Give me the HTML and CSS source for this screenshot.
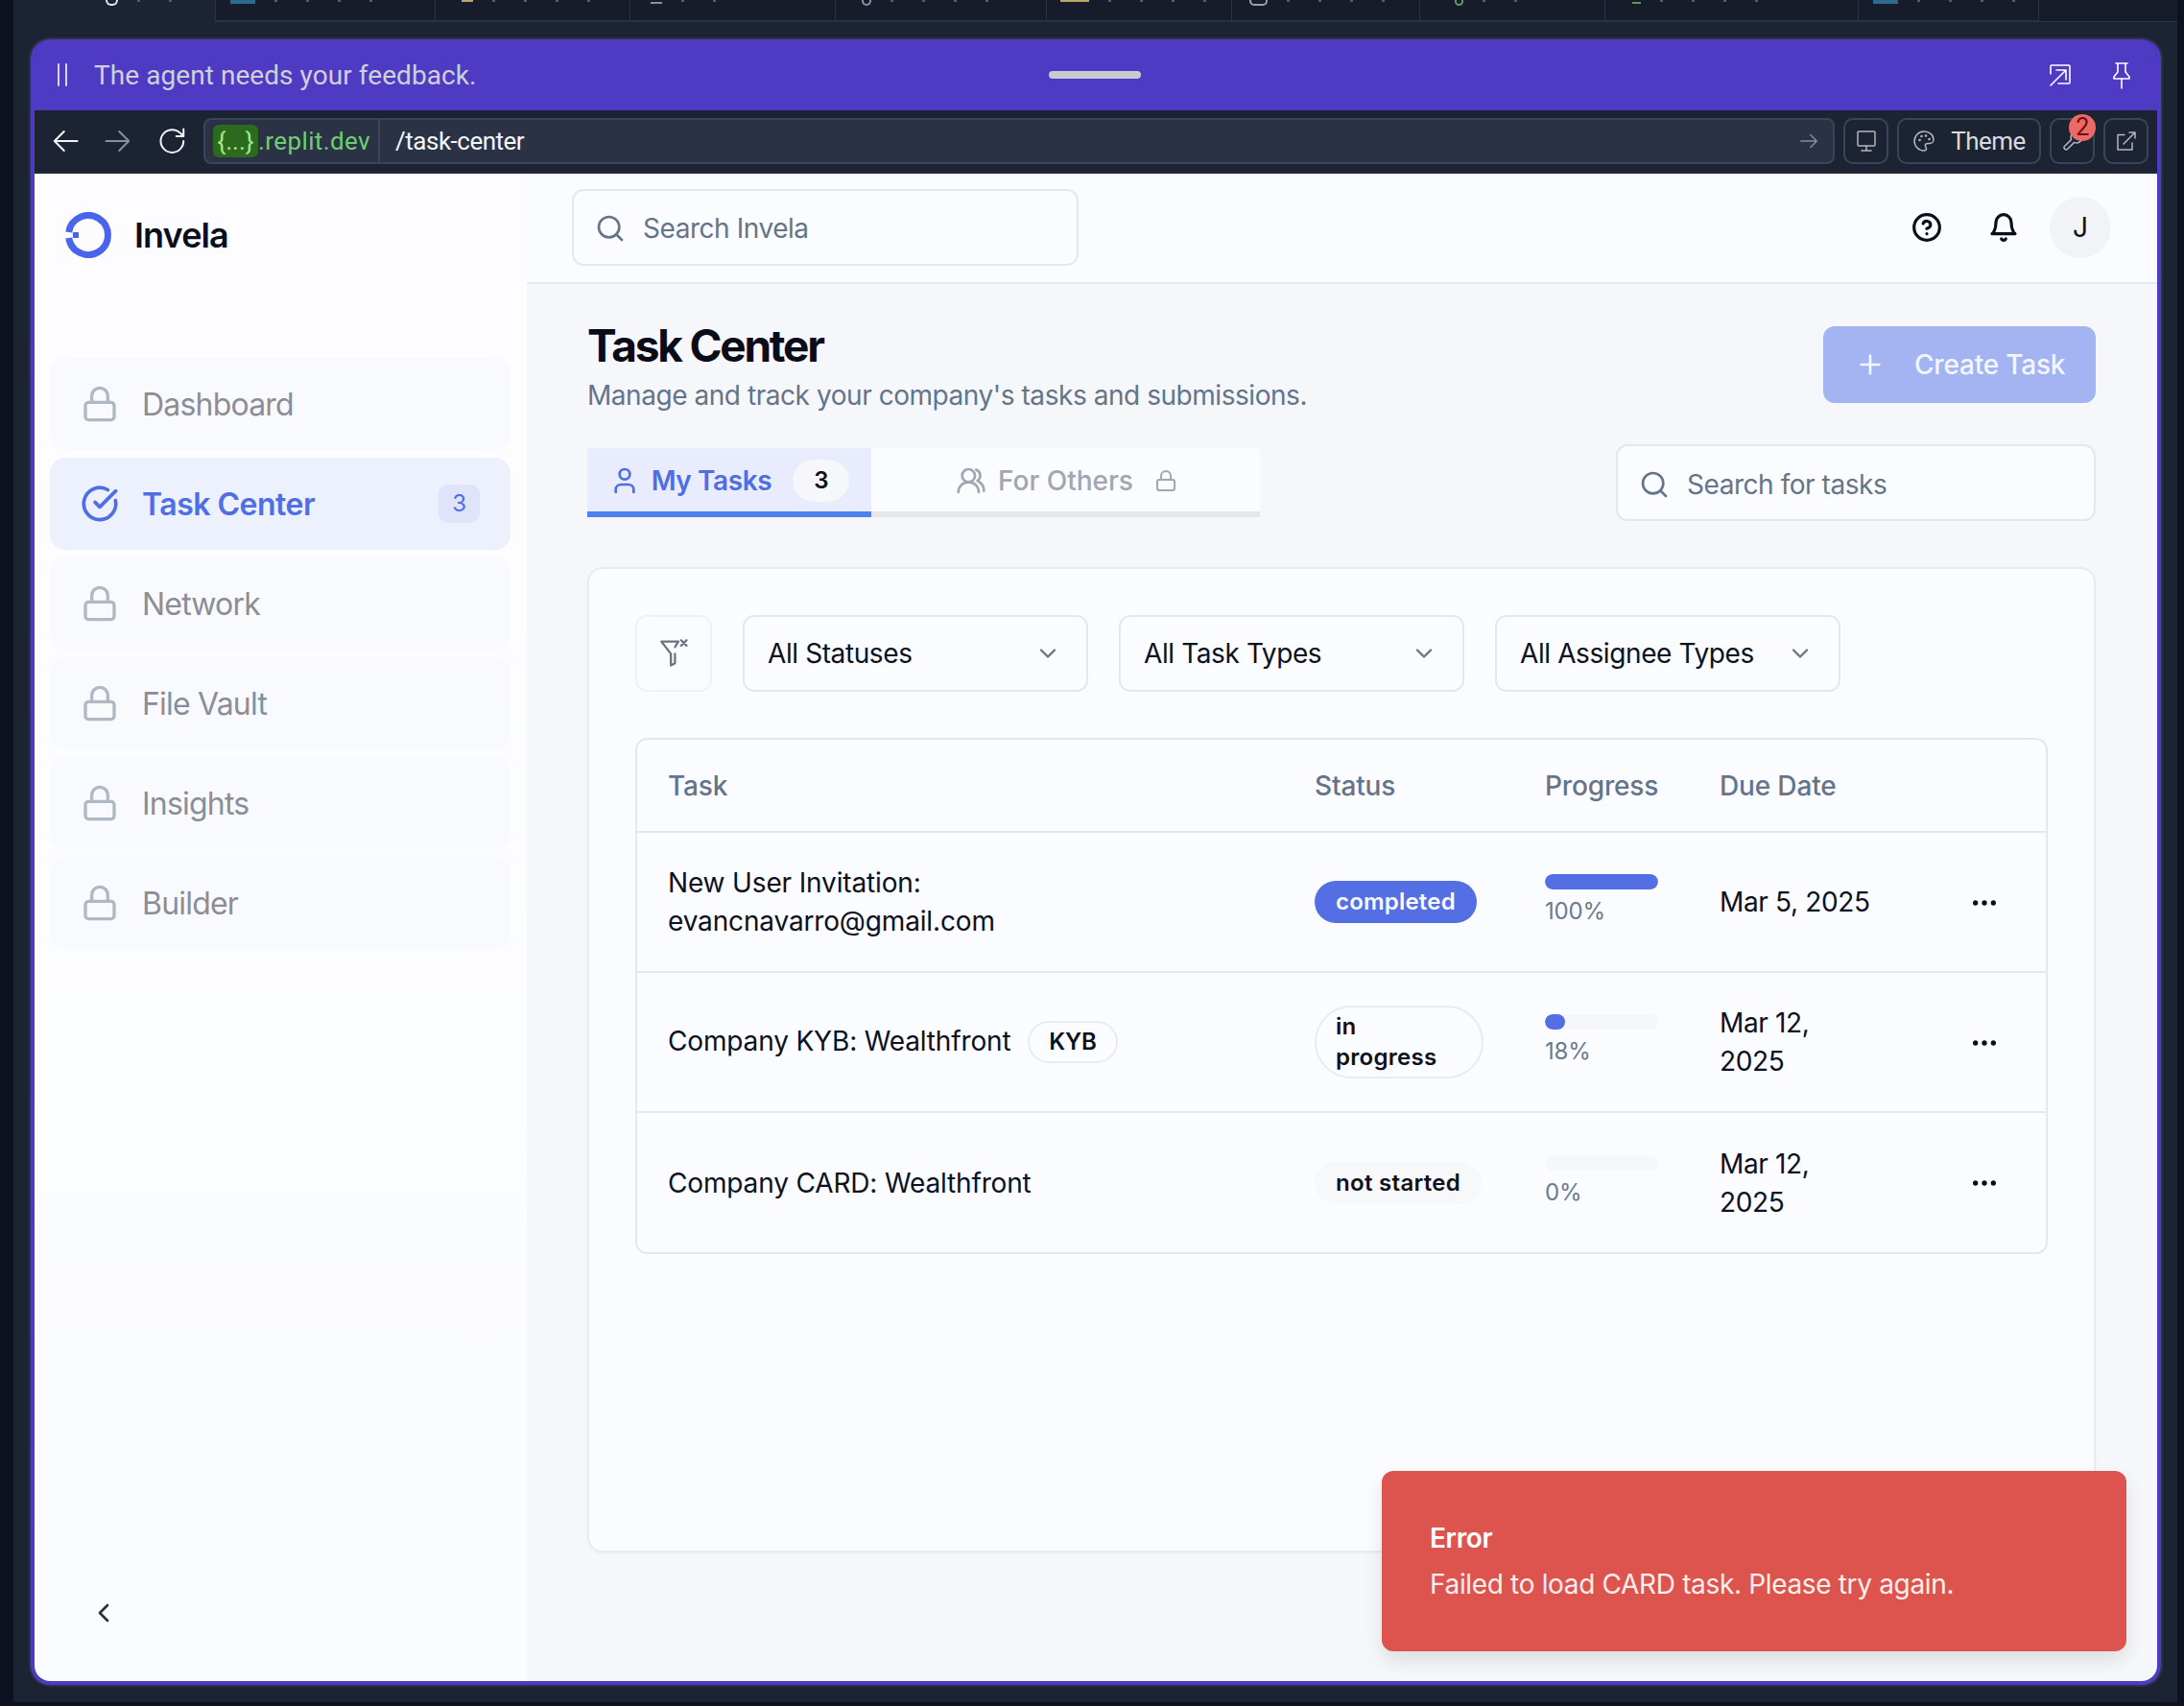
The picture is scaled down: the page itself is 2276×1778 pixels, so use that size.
FILE: index.html
```html
<!DOCTYPE html>
<html lang="en">
<head>
    <meta charset="UTF-8">
    <meta name="viewport" content="width=device-width, initial-scale=1.0">
    <title>Invela - Task Center</title>
    <link rel="stylesheet" href="styles.css">
</head>
<body>
    <div class="tabstrip">
        <div class="strip-tab strip-tab-active"><i class="mark mark-ring"></i><i class="dots dots-short"></i></div>
        <div class="strip-tab strip-w1"><i class="mark mark-blue"></i><i class="dots"></i></div>
        <div class="strip-tab strip-w2"><i class="mark mark-tan"></i><i class="dots"></i></div>
        <div class="strip-tab strip-w3"><i class="mark mark-stem"></i><i class="dots dots-short"></i></div>
        <div class="strip-tab strip-w4"><i class="mark mark-cup"></i><i class="dots"></i></div>
        <div class="strip-tab strip-w5"><i class="mark mark-tan mark-wide"></i><i class="dots"></i></div>
        <div class="strip-tab strip-w6"><i class="mark mark-cup mark-grey"></i><i class="dots"></i></div>
        <div class="strip-tab strip-w7"><i class="mark mark-cup mark-green"></i><i class="dots dots-short"></i></div>
        <div class="strip-tab strip-w8"><i class="mark mark-stem mark-green"></i><i class="dots"></i></div>
        <div class="strip-tab strip-w9"><i class="mark mark-blue"></i><i class="dots"></i></div>
        <div class="strip-end"></div>
    </div>

    <div class="frame">
        <div class="agentbar">
            <svg class="pause-icon" viewBox="0 0 14 24"><path d="M3 1v22M11 1v22"/></svg>
            <span class="agent-msg">The agent needs your feedback.</span>
            <span class="drag-handle"></span>
            <svg class="agent-icon" viewBox="0 0 24 24"><path d="M2 11V3a1 1 0 0 1 1-1h18a1 1 0 0 1 1 1v17a1 1 0 0 1-1 1H10M2 23 18 7M8 7h10v10"/></svg>
            <svg class="agent-icon icon-pin" viewBox="0 0 18 28"><path d="M3 1h12M5 1v9l-4 5v2h16v-2l-4-5V1M9 17v10"/></svg>
        </div>

        <div class="browserbar">
            <svg class="nav-icon nav-on" viewBox="0 0 24 24"><path d="m11 20-8-8 8-8M3 12h19"/></svg>
            <svg class="nav-icon nav-off" viewBox="0 0 24 24"><path d="M2 12h19M13 4l8 8-8 8"/></svg>
            <svg class="nav-icon nav-on nav-reload" viewBox="0 0 24 24"><path d="M21 12a9.500 9.500 0 1 1-9.500-9.500c2.600 0 5 1 6.800 2.800L21 8M21 2v6h-6"/></svg>
            <div class="urlbox">
                <span class="url-host"><span class="url-tag">{...}</span>.replit.dev</span>
                <span class="url-path">/task-center</span>
                <svg class="url-go" viewBox="0 0 24 24"><path d="M3 12h18M14 5l7 7-7 7"/></svg>
            </div>
            <button class="chrome-btn chrome-square">
                <svg viewBox="0 0 24 24"><rect x="3" y="2" width="18" height="15" rx="1"/><path d="M12 17v5M7 22h10"/></svg>
            </button>
            <button class="chrome-btn chrome-theme">
                <svg viewBox="0 0 24 24"><path d="M12 2a10 10 0 0 0 0 20c1.500 0 2.500-1 2.500-2.300 0-.6-.3-1.100-.6-1.500-.4-.4-.6-.9-.6-1.500 0-1.300 1-2.200 2.300-2.200H18a4 4 0 0 0 4-4C22 5.500 17.500 2 12 2z"/><circle cx="7.500" cy="11" r=".6"/><circle cx="9.500" cy="7" r=".6"/><circle cx="14" cy="6.500" r=".6"/><circle cx="17.500" cy="10" r=".6"/></svg>
                Theme
            </button>
            <button class="chrome-btn chrome-square chrome-tools">
                <svg viewBox="0 0 24 24"><path d="M14.700 6.300a1 1 0 0 0 0 1.400l1.600 1.600a1 1 0 0 0 1.400 0l3.800-3.800a6 6 0 0 1-7.900 7.900l-6.900 6.900a2.100 2.100 0 0 1-3-3l6.900-6.900a6 6 0 0 1 7.900-7.900z"/></svg>
                <span class="tools-badge">2</span>
            </button>
            <button class="chrome-btn chrome-square">
                <svg viewBox="0 0 24 24"><path d="M10 5.500H3V21h15v-7M9 15 21 3M15 3h6v6"/></svg>
            </button>
        </div>

        <div class="app">
            <aside class="sidebar">
                <div class="brand">
                    <svg class="brand-logo" viewBox="0 0 48 48">
                        <path d="M3.700 21A20.500 20.500 0 1 1 3.700 27"/>
                        <rect x="8" y="21" width="6" height="6"/>
                    </svg>
                    <span class="brand-name">Invela</span>
                </div>
                <nav class="nav">
                    <a class="nav-item">
                        <svg class="lock" viewBox="0 0 24 24"><rect x="3" y="11" width="18" height="11" rx="2"/><path d="M7 11V7a5 5 0 0 1 10 0v4"/></svg>
                        Dashboard
                    </a>
                    <a class="nav-item nav-item-active">
                        <svg class="lock" viewBox="0 0 24 24"><path d="M21.800 10A10 10 0 1 1 17 3.300"/><path d="m9 11 3 3L22 4"/></svg>
                        Task Center
                        <span class="nav-badge">3</span>
                    </a>
                    <a class="nav-item">
                        <svg class="lock" viewBox="0 0 24 24"><rect x="3" y="11" width="18" height="11" rx="2"/><path d="M7 11V7a5 5 0 0 1 10 0v4"/></svg>
                        Network
                    </a>
                    <a class="nav-item">
                        <svg class="lock" viewBox="0 0 24 24"><rect x="3" y="11" width="18" height="11" rx="2"/><path d="M7 11V7a5 5 0 0 1 10 0v4"/></svg>
                        File Vault
                    </a>
                    <a class="nav-item">
                        <svg class="lock" viewBox="0 0 24 24"><rect x="3" y="11" width="18" height="11" rx="2"/><path d="M7 11V7a5 5 0 0 1 10 0v4"/></svg>
                        Insights
                    </a>
                    <a class="nav-item">
                        <svg class="lock" viewBox="0 0 24 24"><rect x="3" y="11" width="18" height="11" rx="2"/><path d="M7 11V7a5 5 0 0 1 10 0v4"/></svg>
                        Builder
                    </a>
                </nav>
                <svg class="collapse" viewBox="0 0 24 24"><path d="m15 18-6-6 6-6"/></svg>
            </aside>

            <div class="main">
                <header class="topbar">
                    <div class="search search-top">
                        <svg viewBox="0 0 24 24"><circle cx="11" cy="11" r="8"/><path d="m21 21-4.300-4.300"/></svg>
                        Search Invela
                    </div>
                    <div class="topbar-right">
                        <svg class="top-icon" viewBox="0 0 24 24"><circle cx="12" cy="12" r="10"/><path d="M9.100 9a3 3 0 0 1 5.800 1c0 2-3 3-3 3M12 17h.01"/></svg>
                        <svg class="top-icon" viewBox="0 0 24 24"><path d="M6 8a6 6 0 0 1 12 0c0 7 3 9 3 9H3s3-2 3-9M10.300 21a1.900 1.900 0 0 0 3.400 0"/></svg>
                        <span class="avatar">J</span>
                    </div>
                </header>

                <div class="content">
                    <div class="page-head">
                        <div>
                            <h1>Task Center</h1>
                            <p>Manage and track your company's tasks and submissions.</p>
                        </div>
                        <button class="create-btn">
                            <svg viewBox="0 0 24 24"><path d="M5 12h14M12 5v14"/></svg>
                            Create Task
                        </button>
                    </div>

                    <div class="tabs-row">
                        <div class="tabs">
                            <div class="tab tab-active">
                                <svg viewBox="0 0 24 24"><path d="M19 21v-2a4 4 0 0 0-4-4H9a4 4 0 0 0-4 4v2"/><circle cx="12" cy="7" r="4"/></svg>
                                My Tasks
                                <span class="tab-count">3</span>
                            </div>
                            <div class="tab tab-locked">
                                <svg viewBox="0 0 24 24"><path d="M18 21a8 8 0 0 0-16 0"/><circle cx="10" cy="8" r="5"/><path d="M22 20c0-3.400-2-6.500-5-8a5 5 0 0 0-1-8.700"/></svg>
                                For Others
                                <svg class="tab-lock" viewBox="0 0 24 24"><rect x="3" y="11" width="18" height="11" rx="2"/><path d="M7 11V7a5 5 0 0 1 10 0v4"/></svg>
                            </div>
                        </div>
                        <div class="search search-tasks">
                            <svg viewBox="0 0 24 24"><circle cx="11" cy="11" r="8"/><path d="m21 21-4.300-4.300"/></svg>
                            Search for tasks
                        </div>
                    </div>

                    <div class="card">
                        <div class="filters">
                            <button class="filter-clear">
                                <svg viewBox="0 0 24 24"><path d="M13 13v7l-3 1.500V13L3 4h12.500l-2.500 4"/><path d="m17.500 3 4 4M21.500 3l-4 4"/></svg>
                            </button>
                            <div class="select">All Statuses <svg viewBox="0 0 24 24"><path d="m6 9 6 6 6-6"/></svg></div>
                            <div class="select">All Task Types <svg viewBox="0 0 24 24"><path d="m6 9 6 6 6-6"/></svg></div>
                            <div class="select">All Assignee Types <svg viewBox="0 0 24 24"><path d="m6 9 6 6 6-6"/></svg></div>
                        </div>

                        <div class="table-wrap">
                            <table class="task-table">
                                <colgroup>
                                    <col class="col-task"><col class="col-status"><col class="col-progress"><col class="col-due"><col>
                                </colgroup>
                                <thead>
                                    <tr><th>Task</th><th>Status</th><th>Progress</th><th>Due Date</th><th></th></tr>
                                </thead>
                                <tbody>
                                    <tr>
                                        <td>New User Invitation:<br>evancnavarro@gmail.com</td>
                                        <td><span class="pill pill-done">completed</span></td>
                                        <td>
                                            <div class="bar"><div class="bar-fill" style="width: 100%"></div></div>
                                            <div class="pct">100%</div>
                                        </td>
                                        <td class="due">Mar 5, 2025</td>
                                        <td class="row-menu"><svg viewBox="0 0 24 24"><circle cx="5" cy="12" r="2"/><circle cx="12" cy="12" r="2"/><circle cx="19" cy="12" r="2"/></svg></td>
                                    </tr>
                                    <tr>
                                        <td>Company KYB: Wealthfront <span class="kind-tag">KYB</span></td>
                                        <td><span class="pill pill-active">in<br>progress</span></td>
                                        <td>
                                            <div class="bar"><div class="bar-fill" style="width: 18%"></div></div>
                                            <div class="pct">18%</div>
                                        </td>
                                        <td class="due">Mar 12, 2025</td>
                                        <td class="row-menu"><svg viewBox="0 0 24 24"><circle cx="5" cy="12" r="2"/><circle cx="12" cy="12" r="2"/><circle cx="19" cy="12" r="2"/></svg></td>
                                    </tr>
                                    <tr>
                                        <td>Company CARD: Wealthfront</td>
                                        <td><span class="pill pill-idle">not started</span></td>
                                        <td>
                                            <div class="bar"><div class="bar-fill" style="width: 0%"></div></div>
                                            <div class="pct">0%</div>
                                        </td>
                                        <td class="due">Mar 12, 2025</td>
                                        <td class="row-menu"><svg viewBox="0 0 24 24"><circle cx="5" cy="12" r="2"/><circle cx="12" cy="12" r="2"/><circle cx="19" cy="12" r="2"/></svg></td>
                                    </tr>
                                </tbody>
                            </table>
                        </div>
                    </div>
                </div>

                <div class="toast">
                    <strong>Error</strong>
                    <span>Failed to load CARD task. Please try again.</span>
                </div>
            </div>
        </div>
    </div>
</body>
</html>
```

FILE: styles.css
```css
* {
    box-sizing: border-box;
}
html, body {
    margin: 0;
    height: 1778px;
    overflow: hidden;
}
body {
    display: flex;
    flex-direction: column;
    background: #1c2333;
    border-left: 14px solid #0c1220;
    border-right: 7px solid #0c1220;
    border-bottom: 4px solid #0c1220;
    font-family: Inter, "Noto Sans", sans-serif;
    color: #0b1120;
}
button {
    font: inherit;
    cursor: pointer;
}
svg {
    fill: none;
    stroke: currentColor;
    stroke-width: 2;
    stroke-linecap: round;
    stroke-linejoin: round;
    flex: none;
}

/* editor tabs cut off at the top of the shot */
.tabstrip {
    display: flex;
    height: 23px;
    flex: none;
    background: #161c2a;
}
.strip-tab {
    display: flex;
    align-items: flex-start;
    gap: 20px;
    border-right: 1px solid #2b3245;
    border-bottom: 2px solid #2b3245;
}
.strip-tab-active {
    width: 211px;
    padding-left: 96px;
    background: #1c2333;
    border-bottom: none;
}
.strip-w1 { width: 229px; padding-left: 15px; }
.strip-w2 { width: 203px; padding-left: 27px; }
.strip-w3 { width: 214px; padding-left: 21px; }
.strip-w4 { width: 220px; padding-left: 27px; }
.strip-w5 { width: 193px; padding-left: 14px; }
.strip-w6 { width: 196px; padding-left: 18px; }
.strip-w7 { width: 193px; padding-left: 36px; }
.strip-w8 { width: 264px; padding-left: 28px; }
.strip-w9 { width: 187px; padding-left: 15px; border-right: none; }
.strip-end {
    flex: 1;
    border-left: 1px solid #2b3245;
    border-bottom: 1px solid #2b3245;
}
.mark {
    display: block;
    flex: none;
}
.mark-ring {
    width: 13px;
    height: 6px;
    border: 2px solid #e8eaee;
    border-top: none;
    border-radius: 0 0 6px 6px;
}
.mark-blue {
    width: 26px;
    height: 4px;
    background: #2d6a8c;
}
.mark-tan {
    width: 12px;
    height: 2px;
    background: #b7a86a;
}
.mark-wide {
    width: 30px;
}
.mark-stem {
    width: 12px;
    height: 4px;
    border-bottom: 2px solid #8a8f9c;
}
.mark-cup {
    width: 10px;
    height: 6px;
    border: 2px solid #7f93ab;
    border-top: none;
    border-radius: 0 0 5px 5px;
}
.mark-grey {
    width: 19px;
    border-color: #9a9ea8;
}
.mark-green {
    width: 9px;
    border-color: #5c9a5e;
}
.dots {
    display: block;
    width: 110px;
    height: 2px;
    background: repeating-linear-gradient(90deg, #565c6c 0 3px, transparent 3px 33px);
}
.dots-short {
    width: 60px;
}

.frame {
    flex: 1;
    margin: 18px 17px 18px 18px;
    display: flex;
    flex-direction: column;
    border-left: 4px solid #4f3ac4;
    border-right: 4px solid #4f3ac4;
    border-bottom: 4px solid #4f3ac4;
    border-radius: 20px;
    box-shadow: 0 0 0 2px #2b3245;
    overflow: hidden;
}

.agentbar {
    height: 74px;
    flex: none;
    margin: 0 -4px;
    padding: 0 32px 0 26px;
    background: #4f3ac4;
    display: flex;
    align-items: center;
    position: relative;
    color: #fff;
}
.pause-icon {
    width: 14px;
    height: 24px;
    stroke: #d5d6dc;
    stroke-width: 2;
}
.agent-msg {
    margin-left: 26px;
    font-family: Roboto, sans-serif;
    font-size: 28px;
    letter-spacing: 0.060px;
    color: #cfd0d8;
    flex: 1;
}
.drag-handle {
    position: absolute;
    left: 1061px;
    top: 33px;
    width: 96px;
    height: 8px;
    border-radius: 4px;
    background: #c8ccd0;
}
.agent-icon {
    width: 24px;
    height: 24px;
    stroke-width: 1.600;
}
.icon-pin {
    width: 18px;
    height: 28px;
    margin-left: 43px;
    margin-top: 2px;
}

.browserbar {
    height: 66px;
    flex: none;
    display: flex;
    align-items: center;
    gap: 9px;
    padding: 0 9px 0 0;
    background: #1c2333;
    border-bottom: 2px solid #232a3b;
}
.nav-icon {
    width: 30px;
    height: 30px;
    margin-left: 17px;
    margin-right: 16px;
    stroke-width: 1.600;
}
.nav-icon + .nav-icon {
    margin-left: 0;
    margin-right: 18px;
}
.nav-on {
    color: #f2f3f5;
}
.nav-off {
    color: #8a8f9c;
}
.nav-icon + .nav-reload {
    margin-right: 0;
}
.urlbox {
    flex: 1;
    height: 48px;
    margin-left: 8px;
    margin-right: 0;
    padding: 0 14px 0 8px;
    display: flex;
    align-items: center;
    background: #2b3245;
    border: 2px solid #3c445c;
    border-radius: 8px;
    font-family: Roboto, sans-serif;
    font-size: 26px;
}
.url-host {
    display: flex;
    align-items: center;
    height: 100%;
    padding-right: 8px;
    color: #6fcf70;
    letter-spacing: 0.400px;
    border-right: 2px solid #3c445c;
}
.url-tag {
    width: 47px;
    height: 34px;
    line-height: 34px;
    text-align: center;
    border-radius: 6px;
    background: #2c6a1e;
    color: #a2e58e;
    letter-spacing: 0;
}
.url-path {
    flex: 1;
    margin-left: 16px;
    letter-spacing: -0.500px;
    color: #f5f6f8;
}
.url-go {
    width: 22px;
    height: 22px;
    color: #8a8f9c;
    stroke-width: 1.600;
}
.chrome-btn {
    position: relative;
    height: 48px;
    display: flex;
    align-items: center;
    justify-content: center;
    gap: 16px;
    background: #1c2333;
    border: 2px solid #3c445c;
    border-radius: 10px;
    color: #d8dae0;
    font-family: Roboto, sans-serif;
    font-size: 26px;
    letter-spacing: -0.500px;
    padding: 0;
}
.chrome-btn svg {
    width: 24px;
    height: 24px;
    stroke-width: 1.500;
    color: #b4b7bf;
}
.chrome-square {
    width: 47px;
}
.chrome-theme {
    width: 150px;
}
.tools-badge {
    position: absolute;
    top: -6px;
    left: 18px;
    width: 28px;
    height: 28px;
    border-radius: 50%;
    background: #ec6a66;
    color: #6b0f0f;
    font-size: 25px;
    line-height: 28px;
    text-align: center;
}

.app {
    flex: 1;
    display: flex;
    min-height: 0;
}

.sidebar {
    width: 513px;
    flex: none;
    display: flex;
    flex-direction: column;
    padding: 0 17px 0 16px;
    background: linear-gradient(#fdfdff, #fbfcff);
}
.brand {
    height: 192px;
    flex: none;
    display: flex;
    align-items: flex-start;
    padding: 40px 0 0 16px;
    gap: 24px;
}
.brand-logo {
    width: 48px;
    height: 48px;
    stroke: #4965ec;
    stroke-width: 7;
    stroke-linecap: butt;
    stroke-linejoin: miter;
}
.brand-logo rect {
    fill: #4965ec;
    stroke: none;
}
.brand-name {
    font-size: 36px;
    font-weight: 600;
    line-height: 48px;
    letter-spacing: -0.900px;
    color: #0b0f1c;
}
.nav {
    display: flex;
    flex-direction: column;
    gap: 8px;
}
.nav-item {
    height: 96px;
    padding: 0 32px 0 32px;
    display: flex;
    align-items: center;
    gap: 24px;
    border-radius: 16px;
    background: #f9fafd;
    color: #8b8e99;
    font-size: 32px;
    letter-spacing: -0.800px;
}
.lock {
    width: 40px;
    height: 40px;
    color: #b0b8c4;
}
.nav-item-active {
    background: #edf0fd;
    color: #4f6ee4;
    font-weight: 600;
    letter-spacing: -0.500px;
}
.nav-item-active .lock {
    color: #4f6ee4;
    stroke-width: 2.200;
}
.nav-badge {
    margin-left: auto;
    width: 43px;
    height: 40px;
    line-height: 40px;
    text-align: center;
    border-radius: 10px;
    background: #dfe4fa;
    font-size: 24px;
    font-weight: 400;
}
.collapse {
    width: 32px;
    height: 32px;
    margin: auto 0 55px 40px;
    color: #2b3040;
}

.main {
    position: relative;
    flex: 1;
    min-width: 0;
    background: #f6f7fa;
}
.topbar {
    height: 115px;
    padding: 16px 48px 0 47px;
    display: flex;
    justify-content: space-between;
    align-items: flex-start;
    background: #fbfcff;
    border-bottom: 2px solid #e6e9ef;
}
.search {
    display: flex;
    align-items: center;
    height: 80px;
    gap: 18px;
    padding: 2px 22px 0;
    background: #fbfcff;
    border: 2px solid #e4e8ee;
    border-radius: 12px;
    color: #64748b;
    font-size: 28px;
    letter-spacing: -0.450px;
}
.search svg {
    width: 32px;
    height: 32px;
}
.search-top {
    width: 528px;
}
.search-tasks {
    width: 500px;
    padding-top: 3px;
}
.topbar-right {
    display: flex;
    align-items: center;
    gap: 48px;
    margin-top: 8px;
}
.top-icon {
    width: 32px;
    height: 32px;
    color: #0b0f1c;
    stroke-width: 2.400;
}
.avatar {
    width: 64px;
    height: 64px;
    margin-left: -16px;
    line-height: 64px;
    text-align: center;
    border-radius: 50%;
    background: #f1f3f7;
    font-size: 28px;
}

.content {
    padding: 46px 64px 0 63px;
}
.page-head {
    display: flex;
    justify-content: space-between;
    align-items: flex-start;
    height: 121px;
}
h1 {
    margin: -4px 0 0;
    font-size: 46px;
    line-height: 44px;
    font-weight: 700;
    letter-spacing: -2.200px;
    color: #0a0d18;
}
.page-head p {
    margin: 10px 0 0;
    font-size: 28px;
    line-height: 40px;
    letter-spacing: -0.450px;
    color: #64748b;
}
.create-btn {
    width: 284px;
    height: 80px;
    margin-top: -2px;
    display: flex;
    align-items: center;
    gap: 30px;
    padding: 0 0 0 33px;
    border: none;
    border-radius: 12px;
    background: #a4b4f2;
    color: #f4f6fe;
    font-size: 28px;
    font-weight: 500;
    letter-spacing: -0.200px;
}
.create-btn svg {
    width: 32px;
    height: 32px;
}

.tabs-row {
    display: flex;
    justify-content: space-between;
    align-items: flex-start;
    margin-bottom: 48px;
}
.tabs {
    display: flex;
    margin-top: 4px;
    height: 72px;
}
.tab {
    display: flex;
    align-items: center;
    justify-content: center;
    padding-top: 1px;
    font-size: 28px;
    font-weight: 500;
}
.tab svg {
    width: 32px;
    height: 32px;
}
.tab-active {
    width: 296px;
    gap: 12px;
    background: #e9ecfd;
    color: #4f6ee4;
    font-weight: 600;
    letter-spacing: -0.400px;
    border-bottom: 6px solid #4d81ee;
}
.tab-count {
    width: 59px;
    height: 44px;
    margin-left: 10px;
    line-height: 44px;
    text-align: center;
    border-radius: 22px;
    background: #f6f7fa;
    color: #0b1120;
    font-size: 24px;
    font-weight: 600;
}
.tab-locked {
    width: 405px;
    gap: 12px;
    padding-left: 2px;
    background: #fbfcff;
    color: #a0a6b2;
    border-bottom: 6px solid #e5e7eb;
}
.tab-locked .tab-lock {
    width: 24px;
    height: 24px;
    margin-left: 10px;
}

.card {
    height: 1027px;
    padding: 48px;
    background: #fbfcff;
    border: 2px solid #e8ebf0;
    border-radius: 16px;
    box-shadow: 0 1px 3px rgba(0, 0, 0, 0.04);
}
.filters {
    display: flex;
    gap: 32px;
    margin-bottom: 48px;
}
.filter-clear {
    width: 80px;
    height: 80px;
    display: flex;
    align-items: center;
    justify-content: center;
    padding: 0 0 2px;
    background: #fbfcff;
    border: 2px solid #eff1f5;
    border-radius: 12px;
    color: #6c7280;
}
.filter-clear svg {
    width: 34px;
    height: 34px;
    stroke-width: 1.600;
}
.select {
    width: 360px;
    height: 80px;
    padding: 0 26px 0 24px;
    display: flex;
    align-items: center;
    justify-content: space-between;
    border: 2px solid #e4e8ee;
    border-radius: 12px;
    font-size: 28px;
    letter-spacing: -0.400px;
}
.select svg {
    width: 28px;
    height: 28px;
    color: #6c7280;
}

.table-wrap {
    border: 2px solid #e4e8ee;
    border-radius: 12px;
    overflow: hidden;
}
.task-table {
    width: 100%;
    border-collapse: collapse;
    table-layout: fixed;
    font-size: 28px;
    letter-spacing: -0.150px;
}
.col-task { width: 674px; }
.col-status { width: 240px; }
.col-progress { width: 182px; }
.col-due { width: 230px; }
th {
    height: 96px;
    padding: 0 32px;
    text-align: left;
    font-weight: 500;
    color: #64748b;
}
td {
    height: 146px;
    padding: 0 32px;
    line-height: 40px;
    border-top: 2px solid #e4e8ee;
}
.due {
    letter-spacing: -0.350px;
}
.kind-tag {
    display: inline-block;
    height: 44px;
    margin-left: 10px;
    padding: 0 20px;
    line-height: 40px;
    vertical-align: 1px;
    border: 2px solid #e8ebf0;
    border-radius: 22px;
    font-size: 24px;
    font-weight: 600;
}
.pill {
    display: inline-block;
    min-height: 44px;
    padding: 0 22px;
    line-height: 44px;
    border-radius: 22px;
    font-size: 24px;
    font-weight: 600;
    letter-spacing: 0.300px;
    white-space: nowrap;
}
.pill-done {
    background: #546fe4;
    color: #f8f9ff;
    letter-spacing: 0.200px;
}
.pill-active {
    width: 176px;
    padding: 4px 20px;
    line-height: 32px;
    border: 2px solid #e8ebf0;
    border-radius: 38px;
}
.pill-idle {
    background: #f7f8fa;
}
.bar {
    height: 16px;
    margin-top: 1px;
    border-radius: 8px;
    background: #f6f7fa;
    overflow: hidden;
}
.bar-fill {
    height: 100%;
    border-radius: 8px;
    background: #546fe4;
}
.pct {
    margin-top: 3px;
    font-size: 24px;
    line-height: 40px;
    color: #6b7a90;
}
.row-menu {
    padding: 0 48px 0 0;
    text-align: right;
}
.row-menu svg {
    width: 32px;
    height: 32px;
    display: inline-block;
    vertical-align: middle;
    margin-bottom: 3px;
    stroke: none;
    fill: #0b0f1c;
}

.toast {
    position: absolute;
    right: 32px;
    bottom: 31px;
    width: 776px;
    height: 188px;
    padding: 0 50px;
    display: flex;
    flex-direction: column;
    justify-content: center;
    gap: 8px;
    border-radius: 12px;
    background: #dd544e;
    box-shadow: 0 10px 20px rgba(0, 0, 0, 0.1);
    color: #fff;
    font-size: 28px;
    line-height: 40px;
    letter-spacing: -0.340px;
}
.toast strong {
    font-weight: 600;
}
.toast span {
    opacity: 0.9;
}
```
